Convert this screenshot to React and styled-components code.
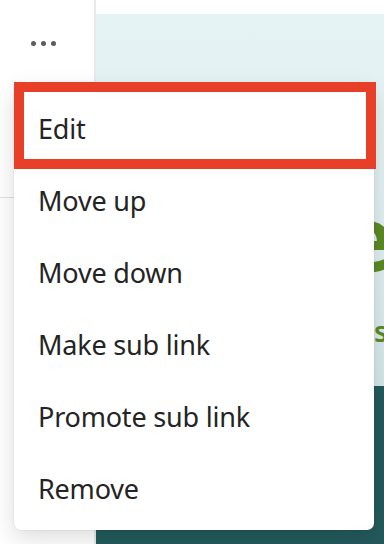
import React from 'react'
import styled, { createGlobalStyle } from 'styled-components'

const GlobalStyle = createGlobalStyle`
  html, body {
    margin: 0;
    padding: 0;
    background: #ffffff;
  }
  body {
    font-family: "Noto Sans", "Open Sans", "Liberation Sans", sans-serif;
  }
`

const Page = styled.div`
  position: relative;
  width: 384px;
  height: 544px;
  overflow: hidden;
  display: grid;
  grid-template-columns: 94px 2px 1fr;
`

const Nav = styled.div`
  display: flex;
  flex-direction: column;
  background: #ffffff;
`

const MoreButton = styled.div`
  height: 86px;
  display: flex;
  align-items: center;
  justify-content: center;
  gap: 5px;
  padding-right: 8px;
`

const Dot = styled.span`
  width: 5px;
  height: 5px;
  border-radius: 50%;
  background: #5c5c5c;
`

const NavBody = styled.div`
  height: 111px;
`

const NavDivider = styled.div`
  height: 1px;
  background: #e1e1e1;
`

const Rule = styled.div`
  background: #e9e9e9;
`

const Content = styled.div`
  display: flex;
  flex-direction: column;
`

const TopStrip = styled.div`
  height: 14px;
  background: #ffffff;
`

const Hero = styled.div`
  height: 372px;
  background: linear-gradient(180deg, #e6f3f4 0%, #e1eff1 60%, #d5e7e9 100%);
  overflow: hidden;
  padding: 177px 0 0 244px;
  box-sizing: border-box;
  display: flex;
  flex-direction: column;
  align-items: flex-start;
`

const HeroTitle = styled.span`
  font-size: 90px;
  font-weight: 700;
  line-height: 90px;
  color: #5b8a26;
`

const HeroSub = styled.span`
  margin: 36px 0 0 34px;
  font-size: 28px;
  line-height: 28px;
  font-weight: 600;
  color: #5b8a26;
`

const Band = styled.div`
  flex: 1;
  background: #245a5c;
`

const Menu = styled.ul`
  position: absolute;
  top: 84px;
  left: 14px;
  width: 360px;
  margin: 0;
  padding: 8px 0 6px;
  list-style: none;
  background: #ffffff;
  border-radius: 7px;
  box-shadow: 0 0 2px rgba(0, 0, 0, 0.12), 0 8px 24px rgba(0, 0, 0, 0.14);
  box-sizing: border-box;
`

const Item = styled.li`
  height: 72px;
  display: flex;
  align-items: center;
  padding-left: 24px;
  font-size: 27px;
  color: #242424;
  letter-spacing: -0.2px;
`

const Highlight = styled.div`
  position: absolute;
  top: -2px;
  left: 0;
  width: 362px;
  height: 87px;
  border: 10px solid #e84028;
  box-sizing: border-box;
  pointer-events: none;
`

const items = ['Edit', 'Move up', 'Move down', 'Make sub link', 'Promote sub link', 'Remove']

export default function App() {
  return (
    <>
      <GlobalStyle />
      <Page>
        <Nav>
          <MoreButton>
            <Dot />
            <Dot />
            <Dot />
          </MoreButton>
          <NavBody />
          <NavDivider />
        </Nav>
        <Rule />
        <Content>
          <TopStrip />
          <Hero>
            <HeroTitle>e</HeroTitle>
            <HeroSub>s</HeroSub>
          </Hero>
          <Band />
        </Content>
        <Menu>
          {items.map((label) => (
            <Item key={label}>{label}</Item>
          ))}
          <Highlight />
        </Menu>
      </Page>
    </>
  )
}
